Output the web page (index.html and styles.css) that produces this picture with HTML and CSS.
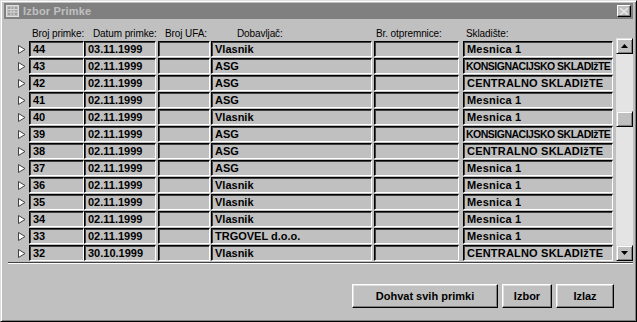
FILE: index.html
```html
<!DOCTYPE html>
<html>
<head>
<meta charset="utf-8">
<link rel="stylesheet" href="styles.css">
</head>
<body>
<div class="window">
  <div class="titlebar">
    <svg class="ticon" width="13" height="12" viewBox="0 0 13 12">
      <rect x="0.5" y="0.5" width="12" height="11" fill="#c0c0c0" stroke="#e0e0e0"/>
      <rect x="2" y="2" width="9" height="8" fill="#a0a0a0"/>
      <path d="M2 4.5H11M2 7H11M5 2V10M8 2V10" stroke="#d8d8d8" stroke-width="1"/>
    </svg>
    <span class="title">Izbor Primke</span>
    <div class="close">
      <svg width="8" height="7" viewBox="0 0 8 7"><path d="M0 0L8 7M8 0L0 7" stroke="#e8e8e8" stroke-width="1.5"/></svg>
    </div>
  </div>
  <div class="subform">
    <div class="headers">
      <span class="h h-num">Broj primke:</span>
      <span class="h h-date">Datum primke:</span>
      <span class="h h-ufa">Broj UFA:</span>
      <span class="h h-dob">Dobavljač:</span>
      <span class="h h-otp">Br. otpremnice:</span>
      <span class="h h-skl">Skladište:</span>
    </div>
    <div class="grid">
      <div class="rows" id="rows"></div>
      <div class="scrollbar">
        <div class="sbtn"><svg width="7" height="4" viewBox="0 0 7 4"><path d="M3.5 0L7 4H0Z" fill="#000"/></svg></div>
        <div class="track">
          <div class="thumb"></div>
        </div>
        <div class="sbtn"><svg width="7" height="4" viewBox="0 0 7 4"><path d="M0 0H7L3.5 4Z" fill="#000"/></svg></div>
      </div>
    </div>
  </div>
  <div class="buttons">
    <div class="btn b-dohvat">Dohvat svih primki</div>
    <div class="btn b-izbor">Izbor</div>
    <div class="btn b-izlaz">Izlaz</div>
  </div>
</div>
<script>
var data = [
  ["44","03.11.1999","Vlasnik","Mesnica 1"],
  ["43","02.11.1999","ASG","KONSIGNACIJSKO SKLADIžTE"],
  ["42","02.11.1999","ASG","CENTRALNO SKLADIžTE"],
  ["41","02.11.1999","ASG","Mesnica 1"],
  ["40","02.11.1999","Vlasnik","Mesnica 1"],
  ["39","02.11.1999","ASG","KONSIGNACIJSKO SKLADIžTE"],
  ["38","02.11.1999","ASG","CENTRALNO SKLADIžTE"],
  ["37","02.11.1999","ASG","Mesnica 1"],
  ["36","02.11.1999","Vlasnik","Mesnica 1"],
  ["35","02.11.1999","Vlasnik","Mesnica 1"],
  ["34","02.11.1999","Vlasnik","Mesnica 1"],
  ["33","02.11.1999","TRGOVEL d.o.o.","Mesnica 1"],
  ["32","30.10.1999","Vlasnik","CENTRALNO SKLADIžTE"]
];
var html = "";
data.forEach(function(r){
  var long = r[3].length > 20 ? " f-long" : "";
  html += '<div class="row">' +
    '<div class="sel"><svg width="8" height="9" viewBox="0 0 8 9"><path d="M0.5 0.5L7 4.5L0.5 8.5Z" fill="#fff" stroke="#404040" stroke-width="1"/></svg></div>' +
    '<div class="f f-num">'+r[0]+'</div>' +
    '<div class="f f-date">'+r[1]+'</div>' +
    '<div class="f f-ufa"></div>' +
    '<div class="f f-dob">'+r[2]+'</div>' +
    '<div class="f f-otp"></div>' +
    '<div class="f f-skl'+long+'">'+r[3]+'</div>' +
    '</div>';
});
document.getElementById("rows").innerHTML = html;
</script>
</body>
</html>
```

FILE: styles.css
```css
html, body {
  margin: 0;
  padding: 0;
  background: #c0c0c0;
}
body {
  font-family: "Liberation Sans", Arial, sans-serif;
  font-size: 11px;
  color: #000;
}
.window {
  width: 637px;
  height: 322px;
  box-sizing: border-box;
  background: #c0c0c0;
  border-top: 1px solid #dfdfdf;
  border-left: 1px solid #dfdfdf;
  border-right: 1px solid #000;
  border-bottom: 1px solid #000;
  box-shadow: inset 1px 1px 0 #fff, inset -1px -1px 0 #808080;
  padding: 2px 3px 0 3px;
  display: flex;
  flex-direction: column;
}
.titlebar {
  height: 16px;
  background: #808080;
  display: flex;
  align-items: center;
  padding-left: 2px;
}
.ticon {
  display: block;
  margin-right: 4px;
}
.title {
  color: #c0c0c0;
  font-weight: bold;
  font-size: 11px;
  letter-spacing: 0.2px;
  flex: 1;
}
.close {
  width: 14px;
  height: 12px;
  box-sizing: border-box;
  background: #c0c0c0;
  border-top: 1px solid #fff;
  border-left: 1px solid #fff;
  border-right: 1px solid #000;
  border-bottom: 1px solid #000;
  box-shadow: inset -1px -1px 0 #808080;
  margin-right: 2px;
  display: flex;
  align-items: center;
  justify-content: center;
}
.subform {
  margin-left: 4px;
  width: 625px;
  border-bottom: 1px solid #404040;
  box-shadow: 0 1px 0 #fff;
  padding-bottom: 1px;
}
.headers {
  position: relative;
  height: 21px;
}
.h {
  position: absolute;
  top: 9px;
  white-space: nowrap;
  font-size: 10px;
  letter-spacing: -0.1px;
}
.h-num { left: 24px; }
.h-date { left: 85px; }
.h-ufa { left: 157px; }
.h-dob { left: 229px; }
.h-otp { left: 368px; }
.h-skl { left: 458px; }
.grid {
  display: flex;
}
.rows {
  width: 607px;
}
.row {
  display: flex;
  height: 17px;
  padding-top: 1px;
  box-sizing: border-box;
}
.sel {
  width: 21px;
  display: flex;
  align-items: center;
  justify-content: center;
  padding-left: 6px;
  box-sizing: border-box;
}
.sel svg { display: block; }
.f {
  height: 16px;
  box-sizing: border-box;
  border-top: 1px solid #000;
  border-left: 1px solid #000;
  border-right: 1px solid #fff;
  border-bottom: 1px solid #fff;
  box-shadow: inset 1px 1px 0 #404040;
  padding: 1px 0 0 3px;
  font-weight: bold;
  font-size: 11px;
  line-height: 13px;
  white-space: nowrap;
  overflow: hidden;
}
.f-num { width: 55px; }
.f-date { width: 72px; margin-left: 0; }
.f-ufa { width: 52px; margin-left: 2px; }
.f-dob { width: 161px; margin-left: 1px; }
.f-otp { width: 85px; margin-left: 2px; }
.f-skl { width: 150px; margin-left: 4px; letter-spacing: 0.2px; }
.f-long { letter-spacing: -0.5px; font-size: 10.5px; padding-left: 2px; }
.scrollbar {
  margin-left: 2px;
  margin-top: -2px;
  width: 17px;
  height: 223px;
  display: flex;
  flex-direction: column;
}
.sbtn {
  height: 16px;
  box-sizing: border-box;
  background: #c0c0c0;
  border-top: 1px solid #dfdfdf;
  border-left: 1px solid #dfdfdf;
  border-right: 1px solid #000;
  border-bottom: 1px solid #000;
  box-shadow: inset 1px 1px 0 #fff, inset -1px -1px 0 #808080;
  display: flex;
  align-items: center;
  justify-content: center;
}
.track {
  flex: 1;
  background: #e4e4e4;
  padding-top: 57px;
}
.thumb {
  height: 16px;
  box-sizing: border-box;
  background: #c0c0c0;
  border-top: 1px solid #dfdfdf;
  border-left: 1px solid #dfdfdf;
  border-right: 1px solid #000;
  border-bottom: 1px solid #000;
  box-shadow: inset 1px 1px 0 #fff, inset -1px -1px 0 #808080;
}
.buttons {
  display: flex;
  margin-top: 21px;
  margin-left: 348px;
  gap: 4px;
}
.btn {
  height: 24px;
  box-sizing: border-box;
  background: #c0c0c0;
  border-top: 1px solid #fff;
  border-left: 1px solid #fff;
  border-right: 1px solid #000;
  border-bottom: 1px solid #000;
  box-shadow: inset -1px -1px 0 #808080, inset 1px 1px 0 #dfdfdf;
  font-weight: bold;
  font-size: 11px;
  display: flex;
  align-items: center;
  justify-content: center;
}
.b-dohvat { width: 146px; }
.b-izbor { width: 50px; }
.b-izlaz { width: 58px; }
```
